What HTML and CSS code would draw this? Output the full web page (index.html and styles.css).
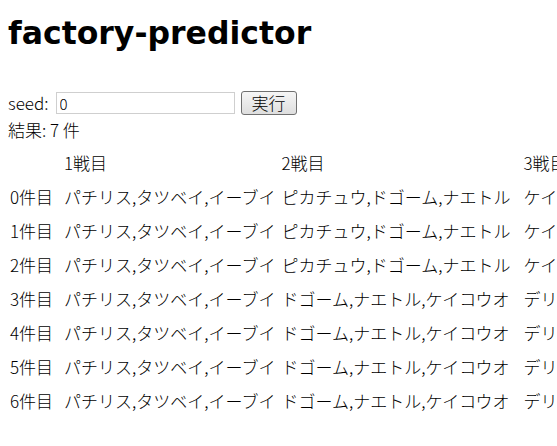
FILE: index.html
```html
<!DOCTYPE html>
<html lang="ja">
<head>
<meta charset="utf-8">
<title>factory-predictor</title>
<link rel="stylesheet" href="styles.css">
</head>
<body>
<h1 class="title">factory-predictor</h1>
<form class="form">
  <label class="label" for="seed">seed:</label>
  <input class="seed" id="seed" type="text" value="0">
  <button class="run" type="button">実行</button>
</form>
<div class="count">結果: 7 件</div>
<div class="table-wrap">
<table class="results">
  <thead>
    <tr><th class="idx"></th><th class="battle1">1戦目</th><th class="battle2">2戦目</th><th class="battle3">3戦目</th></tr>
  </thead>
  <tbody>
    <tr><td class="idx">0件目</td><td>パチリス,タツベイ,イーブイ</td><td>ピカチュウ,ドゴーム,ナエトル</td><td>ケイコウオ,デリバード,ヤミカラス</td></tr>
    <tr><td class="idx">1件目</td><td>パチリス,タツベイ,イーブイ</td><td>ピカチュウ,ドゴーム,ナエトル</td><td>ケイコウオ,デリバード,ヤミカラス</td></tr>
    <tr><td class="idx">2件目</td><td>パチリス,タツベイ,イーブイ</td><td>ピカチュウ,ドゴーム,ナエトル</td><td>ケイコウオ,デリバード,ヤミカラス</td></tr>
    <tr><td class="idx">3件目</td><td>パチリス,タツベイ,イーブイ</td><td>ドゴーム,ナエトル,ケイコウオ</td><td>デリバード,ヤミカラス,ピカチュウ</td></tr>
    <tr><td class="idx">4件目</td><td>パチリス,タツベイ,イーブイ</td><td>ドゴーム,ナエトル,ケイコウオ</td><td>デリバード,ヤミカラス,ピカチュウ</td></tr>
    <tr><td class="idx">5件目</td><td>パチリス,タツベイ,イーブイ</td><td>ドゴーム,ナエトル,ケイコウオ</td><td>デリバード,ヤミカラス,ピカチュウ</td></tr>
    <tr><td class="idx">6件目</td><td>パチリス,タツベイ,イーブイ</td><td>ドゴーム,ナエトル,ケイコウオ</td><td>デリバード,ヤミカラス,ピカチュウ</td></tr>
  </tbody>
</table>
</div>
</body>
</html>
```
FILE: styles.css
```css
html, body {
  background: #ffffff;
}
body {
  margin: 0;
  padding: 8px;
  overflow: hidden;
  color: #000000;
  font-family: "Noto Sans CJK JP", "Noto Sans", sans-serif;
  font-size: 17px;
  font-weight: 300;
  line-height: 20px;
}
.title {
  margin: 5px 0 0;
  font-family: "DejaVu Sans", sans-serif;
  font-weight: bold;
  font-size: 31.5px;
  line-height: 40px;
}
.form {
  margin: 38px 0 0;
  display: flex;
  align-items: center;
  height: 24px;
}
.label {
  margin-right: 7px;
}
.seed {
  box-sizing: border-box;
  width: 179px;
  height: 22px;
  margin: 0;
  padding: 1px 3px;
  border: 1px solid #cfcfcf;
  border-radius: 0;
  font-family: "Noto Sans CJK JP", sans-serif;
  font-size: 15px;
  font-weight: 300;
  line-height: 18px;
  color: #000;
  background: #fff;
}
.run {
  box-sizing: border-box;
  width: 56px;
  height: 24px;
  margin: 0 0 0 6px;
  padding: 0;
  border: 1px solid #707070;
  border-radius: 3px;
  background: linear-gradient(#f6f6f6, #dedede);
  font-family: "Noto Sans CJK JP", sans-serif;
  font-size: 17px;
  font-weight: 300;
  line-height: 20px;
  color: #000;
}
.count {
  margin-top: 5px;
}
.table-wrap {
  margin: 5px -8px 0 0;
  overflow: hidden;
}
.results {
  width: max-content;
  border-collapse: separate;
  border-spacing: 2px;
  margin-left: -2px;
}
.results th,
.results td {
  padding: 6px 2px;
  white-space: nowrap;
  text-align: left;
  font-weight: 300;
}
.results .idx {
  width: 48px;
}
.results .battle2 {
  width: 236px;
}
```
